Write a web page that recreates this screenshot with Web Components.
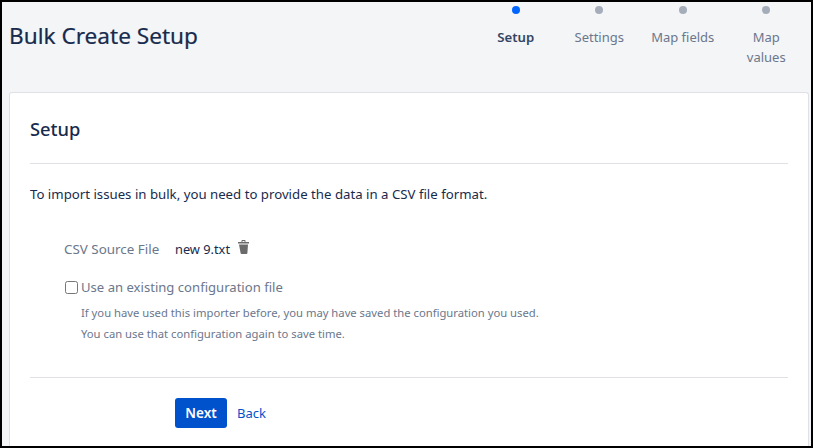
<!DOCTYPE html>
<html lang="en">
<head>
<meta charset="utf-8">
<title>Bulk Create Setup</title>
<style>
    html, body { margin: 0; height: 100%; }
    body { font-family: "Noto Sans", "Open Sans", sans-serif; color: #172b4d; }
</style>
</head>
<body>
<setup-page>
    <step-bar slot="steps">
        <step-item active>Setup</step-item>
        <step-item>Settings</step-item>
        <step-item>Map fields</step-item>
        <step-item>Map values</step-item>
    </step-bar>
    <setup-card>
        <csv-file-row label="CSV Source File" file="new 9.txt"></csv-file-row>
        <config-option label="Use an existing configuration file">
            If you have used this importer before, you may have saved the configuration you used.<br>
            You can use that configuration again to save time.
        </config-option>
    </setup-card>
</setup-page>

<script>
// PAGE FRAME
const setupPageTemplate = document.createElement('template');
setupPageTemplate.innerHTML = `
    <style>
        :host {
            display: flex;
            flex-direction: column;
            box-sizing: border-box;
            width: 813px;
            height: 448px;
            overflow: hidden;
            border: 2px solid #000;
            background-color: #f4f5f7;
        }

        header {
            display: flex;
            justify-content: space-between;
            align-items: flex-start;
            height: 90px;
            padding-left: 7px;
            flex: none;
        }

        h1 {
            margin: 17px 0 0;
            font-size: 22.6px;
            line-height: 34px;
            font-weight: 400;
            color: #172b4d;
            -webkit-text-stroke: 0.2px #172b4d;
        }
    </style>
    <header>
        <h1>Bulk Create Setup</h1>
        <slot name="steps"></slot>
    </header>
    <slot></slot>
`;

class SetupPage extends HTMLElement {
    constructor() {
        super();
        const shadow = this.attachShadow({ mode: 'open' });
        shadow.appendChild(setupPageTemplate.content.cloneNode(true));
    }
}

customElements.define('setup-page', SetupPage);

// STEPPER
const stepBarTemplate = document.createElement('template');
stepBarTemplate.innerHTML = `
    <style>
        :host {
            display: flex;
            padding-right: 3px;
        }
    </style>
    <slot></slot>
`;

class StepBar extends HTMLElement {
    constructor() {
        super();
        const shadow = this.attachShadow({ mode: 'open' });
        shadow.appendChild(stepBarTemplate.content.cloneNode(true));
    }
}

customElements.define('step-bar', StepBar);

const stepItemTemplate = document.createElement('template');
stepItemTemplate.innerHTML = `
    <style>
        :host {
            display: flex;
            flex-direction: column;
            align-items: center;
            width: 83.5px;
            padding-top: 4px;
            font-size: 13px;
            line-height: 20px;
            text-align: center;
            color: #6b778c;
        }

        .dot {
            width: 8px;
            height: 8px;
            border-radius: 50%;
            background-color: #a5adba;
            margin-bottom: 13px;
        }

        .label { width: 66px; }

        :host([active]) { color: #344563; font-size: 13.2px; font-weight: 600; }
        :host([active]) .dot { background-color: #0065ff; }
    </style>
    <span class="dot"></span>
    <span class="label"><slot></slot></span>
`;

class StepItem extends HTMLElement {
    constructor() {
        super();
        const shadow = this.attachShadow({ mode: 'open' });
        shadow.appendChild(stepItemTemplate.content.cloneNode(true));
    }
}

customElements.define('step-item', StepItem);

// CARD
const setupCardTemplate = document.createElement('template');
setupCardTemplate.innerHTML = `
    <style>
        :host {
            display: block;
            flex: 1;
            box-sizing: border-box;
            margin: 0 2px 0 7px;
            padding: 0 20px;
            background-color: #fff;
            border: 1px solid #dfe1e6;
            border-bottom: 0;
            border-radius: 3px 3px 0 0;
        }

        h2 {
            margin: 0;
            height: 71px;
            padding-top: 24px;
            box-sizing: border-box;
            font-size: 18.3px;
            line-height: 24px;
            font-weight: 500;
            color: #172b4d;
            border-bottom: 1px solid #dfe1e6;
        }

        p {
            margin: 20px 0 0;
            font-size: 13.23px;
            line-height: 20px;
            color: #172b4d;
        }

        .fields {
            padding: 26px 0 0 34px;
            height: 165px;
            box-sizing: border-box;
            border-bottom: 1px solid #dfe1e6;
            margin-top: 9px;
        }

        .actions {
            display: flex;
            align-items: center;
            gap: 10px;
            padding: 20px 0 0 145px;
        }

        button {
            width: 52px;
            height: 30px;
            padding: 0;
            font: 600 13.5px "Noto Sans", "Open Sans", sans-serif;
            color: #fff;
            background-color: #0052cc;
            border: 0;
            border-radius: 3px;
        }

        a {
            font-size: 13px;
            color: #0052cc;
            text-decoration: none;
        }
    </style>
    <h2>Setup</h2>
    <p>To import issues in bulk, you need to provide the data in a CSV file format.</p>
    <div class="fields"><slot></slot></div>
    <div class="actions">
        <button type="button">Next</button>
        <a href="#">Back</a>
    </div>
`;

class SetupCard extends HTMLElement {
    constructor() {
        super();
        const shadow = this.attachShadow({ mode: 'open' });
        shadow.appendChild(setupCardTemplate.content.cloneNode(true));
    }
}

customElements.define('setup-card', SetupCard);

// FILE ROW
const csvFileRowTemplate = document.createElement('template');
csvFileRowTemplate.innerHTML = `
    <style>
        :host {
            display: flex;
            align-items: center;
            height: 20px;
            font-size: 13.4px;
            line-height: 20px;
            color: #6b778c;
        }

        .label { width: 111px; }

        .file {
            font-size: 12.8px;
            color: #172b4d;
            margin-right: 8px;
        }

        svg {
            width: 11px;
            height: 14px;
            fill: #6b6b6b;
            margin-top: -4px;
        }
    </style>
    <span class="label"></span>
    <span class="file"></span>
    <svg viewBox="0 0 11 14" aria-hidden="true"><path d="M3.5 2V.8C3.5.4 3.9 0 4.3 0h2.4c.4 0 .8.4.8.8V2H11v1.6H0V2zm1 0h2V1h-2zM1 4.6h9l-.6 8.5c0 .5-.4.9-.9.9h-5c-.5 0-.9-.4-.9-.9z"/></svg>
`;

class CsvFileRow extends HTMLElement {
    constructor() {
        super();
        const shadow = this.attachShadow({ mode: 'open' });
        shadow.appendChild(csvFileRowTemplate.content.cloneNode(true));
        shadow.querySelector('.label').textContent = this.getAttribute('label');
        shadow.querySelector('.file').textContent = this.getAttribute('file');
    }
}

customElements.define('csv-file-row', CsvFileRow);

// CHECKBOX OPTION
const configOptionTemplate = document.createElement('template');
configOptionTemplate.innerHTML = `
    <style>
        :host {
            display: block;
            margin-top: 18px;
            font-size: 13.1px;
            line-height: 20px;
            color: #6b778c;
        }

        label {
            display: flex;
            align-items: center;
            gap: 3px;
        }

        input {
            width: 13px;
            height: 13px;
            margin: 0 0 0 1px;
        }

        .help {
            margin: 5px 0 0 17px;
            font-size: 11.25px;
            line-height: 21px;
        }
    </style>
    <label><input type="checkbox"><span class="text"></span></label>
    <div class="help"><slot></slot></div>
`;

class ConfigOption extends HTMLElement {
    constructor() {
        super();
        const shadow = this.attachShadow({ mode: 'open' });
        shadow.appendChild(configOptionTemplate.content.cloneNode(true));
        shadow.querySelector('.text').textContent = this.getAttribute('label');
    }
}

customElements.define('config-option', ConfigOption);
</script>
</body>
</html>
